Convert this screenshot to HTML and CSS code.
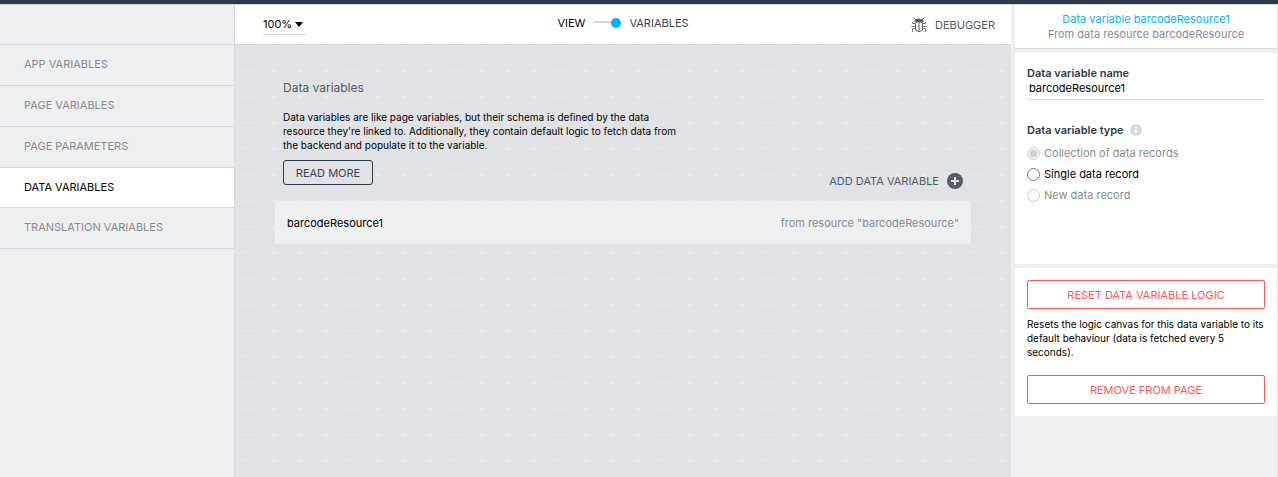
FILE: index.html
```html
<!DOCTYPE html>
<html lang="en">

<head>
    <meta charset="UTF-8">
    <meta name="viewport" content="width=device-width, initial-scale=1.0">
    <title>Data variables</title>
    <link rel="stylesheet" href="styles.css">
</head>

<body>
    <div class="app">
        <nav class="sidebar">
            <div class="sidebar-head"></div>
            <a href="#app-variables">APP VARIABLES</a>
            <a href="#page-variables">PAGE VARIABLES</a>
            <a href="#page-parameters">PAGE PARAMETERS</a>
            <a href="#data-variables" class="active">DATA VARIABLES</a>
            <a href="#translation-variables">TRANSLATION VARIABLES</a>
        </nav>

        <main class="main">
            <header class="toolbar">
                <div class="zoom">
                    <select class="zoom-select" aria-label="Zoom">
                        <option>100%</option>
                    </select>
                    <svg width="8" height="5" viewBox="0 0 8 5"><path d="M0 0h8L4 5z" fill="#000"/></svg>
                </div>
                <div class="mode">
                    <a href="#view" class="mode-view">VIEW</a>
                    <svg width="28" height="10" viewBox="0 0 28 10">
                        <path d="M0 4h20" stroke="#d2d3db" stroke-width="2"/>
                        <circle cx="23" cy="5" r="5" fill="#00b2ff"/>
                    </svg>
                    <a href="#variables">VARIABLES</a>
                </div>
                <button class="debugger">
                    <svg width="16" height="16" viewBox="0 0 16 16" fill="none" stroke="#565b63">
                        <path d="M2.5 0.5l2.500 2.500M13.500 0.5l-2.500 2.500"/>
                        <path d="M4 5c0-4 8-4 8 0z" fill="#565b63"/>
                        <path d="M4.500 6v6c0 1.500 1.500 2.500 3.500 2.500s3.500-1 3.500-2.500V6M8 6v9"/>
                        <path d="M4.500 6.500h-3V5M11.500 6.500h3V5M4.500 9.500H0M11.500 9.500H16M4.500 11.500h-3V15M11.500 11.500h3V15" stroke="#7b7f86"/>
                    </svg>
                    DEBUGGER
                </button>
            </header>

            <div class="canvas">
                <section class="intro">
                    <h1>Data variables</h1>
                    <p>Data variables are like page variables, but their schema is defined by the data resource they're linked to. Additionally, they contain default logic to fetch data from the backend and populate it to the variable.</p>
                    <div class="actions">
                        <button class="read-more">READ MORE</button>
                        <button class="add">
                            ADD DATA VARIABLE
                            <svg width="16" height="16" viewBox="0 0 16 16">
                                <circle cx="8" cy="8" r="8" fill="#565b63"/>
                                <path d="M8 4v8M4 8h8" stroke="#e1e2e6" stroke-width="2"/>
                            </svg>
                        </button>
                    </div>
                </section>
                <a href="#barcodeResource1" class="variable">
                    <span>barcodeResource1</span>
                    <span class="source">from resource "barcodeResource"</span>
                </a>
            </div>
        </main>

        <aside class="inspector">
            <div class="panel summary">
                <h2>Data variable barcodeResource1</h2>
                <p>From data resource barcodeResource</p>
            </div>

            <form class="panel properties">
                <label class="field-label" for="variable-name">Data variable name</label>
                <input class="name-input" type="text" id="variable-name" value="barcodeResource1">

                <fieldset>
                    <legend class="field-label">
                        Data variable type
                        <svg width="12" height="12" viewBox="0 0 12 12">
                            <circle cx="6" cy="6" r="6" fill="#d8d9dd"/>
                            <path d="M6 3v1.500M6 5.500V9" stroke="#fff" stroke-width="1.500"/>
                        </svg>
                    </legend>
                    <label class="radio disabled"><input type="radio" name="type" checked disabled> Collection of data records</label>
                    <label class="radio"><input type="radio" name="type"> Single data record</label>
                    <label class="radio disabled"><input type="radio" name="type" disabled> New data record</label>
                </fieldset>
            </form>

            <div class="panel danger">
                <button>RESET DATA VARIABLE LOGIC</button>
                <p>Resets the logic canvas for this data variable to its default behaviour (data is fetched every 5 seconds).</p>
                <button>REMOVE FROM PAGE</button>
            </div>
        </aside>
    </div>
</body>

</html>
```

FILE: styles.css
```css
* {
    box-sizing: border-box;
}

body {
    margin: 0;
    font-family: Inter, "Liberation Sans", sans-serif;
    font-size: 11px;
    line-height: 14px;
    color: #000;
    background: #eeeff1;
}

h1,
h2,
p {
    margin: 0;
    font-weight: normal;
}

a {
    color: inherit;
    text-decoration: none;
}

button,
input,
select {
    margin: 0;
    font: inherit;
    color: inherit;
}

button {
    padding: 0;
    background: none;
    border: none;
    cursor: pointer;
}

.app {
    display: grid;
    grid-template-columns: 235px 1fr 267px;
    min-height: 100vh;
    border-top: 4px solid #2f3848;
}

/* left menu */
.sidebar {
    border-top: 1px solid #d6d8db;
    border-right: 1px solid #d6d8db;
    color: #888b91;
}

.sidebar-head {
    height: 40px;
    border-bottom: 1px solid #d6d8db;
}

.sidebar a {
    display: flex;
    align-items: center;
    height: 41px;
    padding: 0 24px 2px;
    border-bottom: 1px solid #d6d8db;
}

.sidebar a.active {
    height: 40px;
    color: #000;
    background: #fff;
}

.main {
    display: flex;
    flex-direction: column;
}

.toolbar {
    display: grid;
    grid-template-columns: 1fr auto 1fr;
    align-items: center;
    height: 41px;
    padding: 0 16px;
    background: #fff;
    border-top: 1px solid #d6d8db;
    border-bottom: 1px solid #d6d8db;
    color: #3c4350;
}

.zoom {
    display: flex;
    align-items: center;
    justify-self: start;
    width: 44px;
    height: 20px;
    margin-left: 12px;
    border-bottom: 1px solid #d6d8db;
}

.zoom-select {
    width: 32px;
    padding: 0;
    appearance: none;
    background: none;
    border: none;
    color: #000;
}

.mode {
    display: flex;
    align-items: center;
    gap: 8px;
    padding-bottom: 4px;
}

.mode-view {
    color: #000;
}

.debugger {
    display: flex;
    align-items: center;
    justify-self: end;
    gap: 8px;
    color: #565b63;
}

.canvas {
    flex: 1;
    padding: 36px 40px;
    background-color: #e1e2e6;
    background-image:
        radial-gradient(circle, #ebecef 1px, transparent 2px),
        linear-gradient(to top, #e4e5e9 1px, transparent 1px);
    background-size: 26px 26px;
    background-position: 0 13px, 0 0;
}

.intro {
    padding: 0 8px;
}

.intro h1 {
    margin-bottom: 15px;
    font-size: 12px;
    color: #565b63;
}

.intro p {
    max-width: 400px;
    font-size: 10px;
}

.actions {
    display: flex;
    justify-content: space-between;
    margin: 8px 0 12px;
}

.read-more {
    width: 90px;
    height: 25px;
    border: 1px solid #2f3848;
    border-radius: 3px;
    color: #3c4350;
}

.add {
    display: flex;
    align-items: center;
    gap: 8px;
    height: 16px;
    margin-top: 13px;
    color: #565b63;
}

.variable {
    display: flex;
    justify-content: space-between;
    align-items: center;
    height: 43px;
    padding: 0 12px;
    border-radius: 2px;
    background: #eeeff1;
}

.source {
    color: #888b91;
}

/* right column */
.inspector {
    display: flex;
    flex-direction: column;
    gap: 4px;
    padding-left: 4px;
    border-top: 1px solid #d6d8db;
    border-right: 1px solid #e1e2e6;
}

.panel {
    padding: 12px;
    background: #fff;
}

.summary {
    padding: 7px 12px 6px;
    border-bottom: 1px solid #d6d8db;
    line-height: 15px;
    text-align: center;
    color: #888b91;
}

.summary h2 {
    font-size: 11px;
    color: #00b2ff;
}

.properties {
    min-height: 211px;
}

.field-label {
    display: flex;
    align-items: center;
    gap: 6px;
    line-height: 16px;
    font-weight: 600;
    color: #2f3848;
}

.name-input {
    width: 100%;
    height: 18px;
    padding: 0 2px 4px;
    border: none;
    border-bottom: 1px solid #d6d8db;
}

fieldset {
    margin: 22px 0 0;
    padding: 0;
    border: none;
}

legend {
    margin-bottom: 5px;
    padding: 0;
}

.radio {
    display: flex;
    align-items: center;
    gap: 4px;
    height: 21px;
}

.radio input {
    width: 13px;
    height: 13px;
}

.disabled {
    color: #888b91;
}

.danger button {
    width: 100%;
    height: 29px;
    border: 1px solid #fa5757;
    border-radius: 2px;
    color: #fa5757;
}

.danger p {
    margin: 8px 0 16px;
    font-size: 10px;
}
```
